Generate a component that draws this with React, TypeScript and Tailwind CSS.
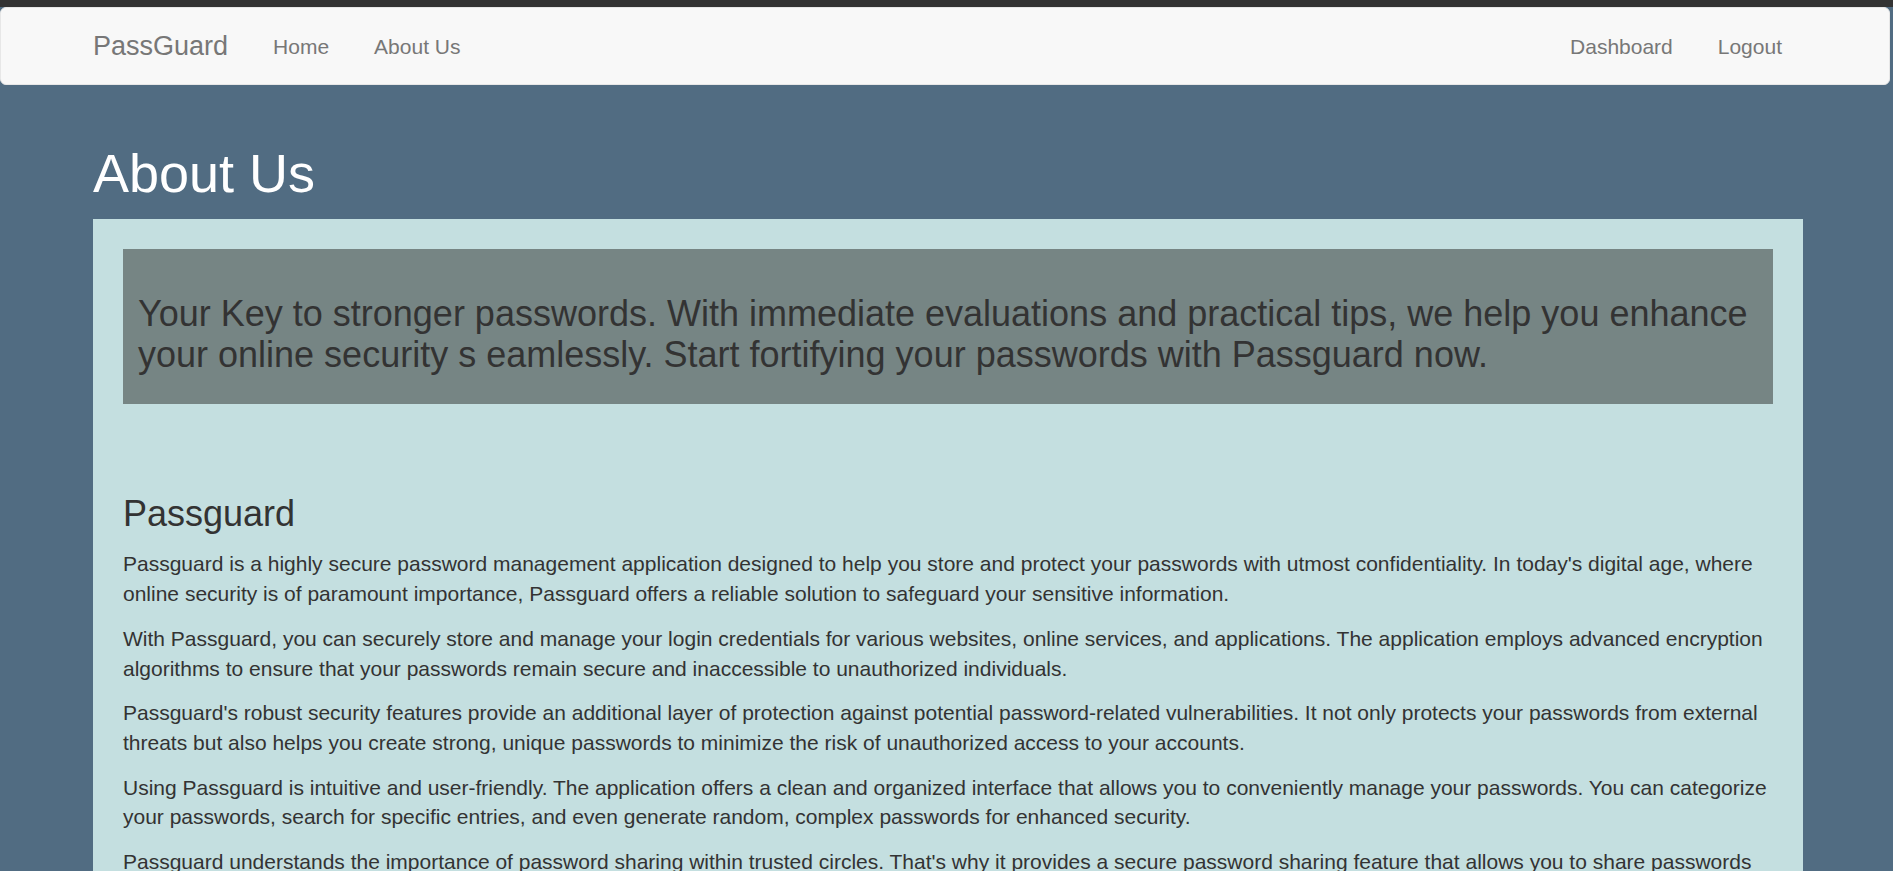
const paragraphs = [
  "Passguard is a highly secure password management application designed to help you store and protect your passwords with utmost confidentiality. In today's digital age, where online security is of paramount importance, Passguard offers a reliable solution to safeguard your sensitive information.",
  "With Passguard, you can securely store and manage your login credentials for various websites, online services, and applications. The application employs advanced encryption algorithms to ensure that your passwords remain secure and inaccessible to unauthorized individuals.",
  "Passguard's robust security features provide an additional layer of protection against potential password-related vulnerabilities. It not only protects your passwords from external threats but also helps you create strong, unique passwords to minimize the risk of unauthorized access to your accounts.",
  "Using Passguard is intuitive and user-friendly. The application offers a clean and organized interface that allows you to conveniently manage your passwords. You can categorize your passwords, search for specific entries, and even generate random, complex passwords for enhanced security.",
  "Passguard understands the importance of password sharing within trusted circles. That's why it provides a secure password sharing feature that allows you to share passwords with family members, friends, or colleagues without compromising their security.",
];

function Navbar() {
  return (
    <nav className="mr-[3px] h-[78px] rounded-[6px] border border-[#e7e7e7] bg-[#f8f8f8]">
      <div className="ml-[92px] flex h-full w-[1710px] items-center justify-between pt-[1px] text-[#777]">
        <div className="flex items-center">
          <a className="pr-[22.5px] text-[27px] leading-none">PassGuard</a>
          <a className="px-[22.5px] text-[21px]">Home</a>
          <a className="px-[22.5px] text-[21px]">About Us</a>
        </div>
        <div className="flex items-center">
          <a className="px-[22.5px] text-[21px]">Dashboard</a>
          <a className="pl-[22.5px] pr-[21px] text-[21px]">Logout</a>
        </div>
      </div>
    </nav>
  );
}

export default function App() {
  return (
    <div className="min-h-screen bg-[#516c82] font-['Liberation_Sans',Arial,sans-serif] text-[#333]">
      <div className="h-[7px] bg-[#333]" />
      <Navbar />
      <main className="ml-[93px] w-[1710px]">
        <h1 className="mt-[59px] mb-[16px] text-[54px] leading-[1.1] text-white">About Us</h1>
        <section className="bg-[#c4dfe0] px-[30px] pt-[30px] pb-[40px]">
          <div className="bg-[#768584] px-[15px] pt-[44px] pb-[29px]">
            <p className="text-[36px] leading-[41px] text-[#333]">
              Your Key to stronger passwords. With immediate evaluations and practical tips, we help you
              enhance your online security s eamlessly. Start fortifying your passwords with Passguard now.
            </p>
          </div>
          <h3 className="mt-[90px] mb-[15px] text-[36px] leading-[40px]">Passguard</h3>
          <div className="flex flex-col gap-[15px]">
            {paragraphs.map((p) => (
              <p key={p.slice(0, 24)} className="text-[21px] leading-[29.7px]">
                {p}
              </p>
            ))}
          </div>
        </section>
      </main>
    </div>
  );
}
